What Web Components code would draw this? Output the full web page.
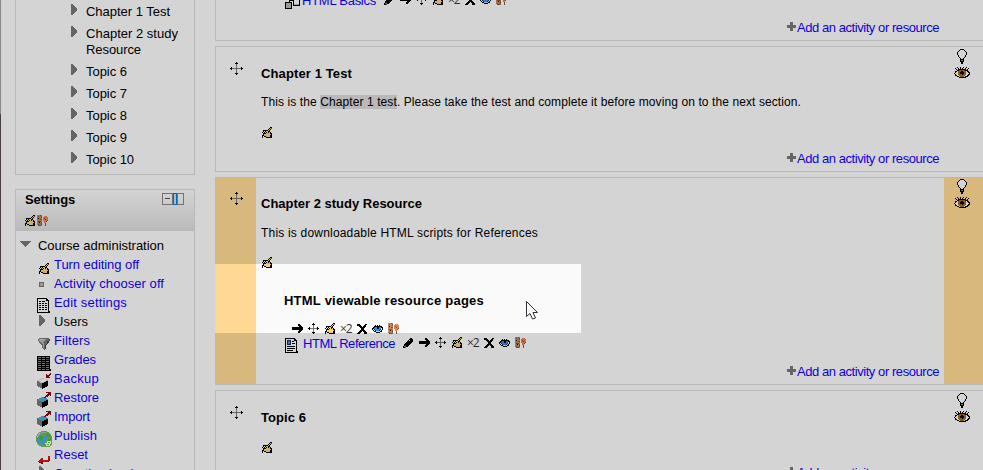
<!DOCTYPE html>
<html lang="en"><head><meta charset="utf-8"><title>Course</title>
<style>html,body{margin:0;height:470px;overflow:hidden;background:#fafafa;font:13px/16px "Liberation Sans",Arial,sans-serif;color:#000}</style></head>
<body><course-page></course-page>
<script>
const colors={k:'#000000',w:'#fafafa',y:'#f6ee28',p:'#f5c89b',g:'#777777',d:'#404040',l:'#b6b6b6',s:'#dddddd',o:'#a66a10',b:'#2f8cf0',n:'#062d79',r:'#900810',R:'#d51b10',G:'#28c04a',c:'#4ba9df',t:'#c08558',u:'#7c5738',e:'#e88252',D:'#222222',h:'#75b84c'};
const maps={
hand:`........kk
.......kyu
......kyk.
.kkkkkyk..
.k.kyykk..
k.kykykpk.
.kkkypppkk
.kpppppppk
kkppppppkk
k.kkppppkk
k...kkkkkk`,
mask:`tttut......
tuttu..eee.
ttttu.eeeee
tkttt.eueee
tttuu.eeuee
ttttt.eeeeu
tuuut..eeu.
ttktu..ee..
ttttu...u..
tuttu...u..
.uuut...u..`,
move:`......k......
.....kkk.....
......g......
......g......
......g......
.k....g....k.
kkgggggggggkk
.k....g....k.
......g......
......g......
......g......
.....kkk.....
......k......`,
moves:`.....k.....
....kkk....
.....g.....
.....g.....
.k...g...k.
kkgggggggkk
.k...g...k.
.....g.....
.....g.....
....kkk....
.....k.....`,
arrow:`......kk...
......kkk..
.......kkk.
kkkkkkkkkkk
kkkkkkkkkkk
kkkkkkkkkkk
.......kkk.
......kkk..
......kk...`,
x:`kkk.....kk
kkkk...kk.
..kkk.kkk.
...kkkkk..
....kkk...
....kkk...
...kkkkk..
..kkk.kkk.
.kkk...kkk
kkk....kkk`,
eye:`...k.k.k...
..kkkkkkkk.
.knbbkkbbkk
kkbbbkkbb.k
k.nbbbbbn.k
.k.nbbbnsk.
..kksssskk.
....kkkk...`,
pencil:`.......kk..
......kkkk.
.....kskkk.
....kkkkkk.
...kkkkkk..
..kkkkkk...
.kkkkkk....
.kdkkk.....
kggkk......
kkg........`,
bulb:`...kkkk...
..kwwwwk..
.kwwwwwwk.
kwwwwwwwwk
kwwwwwwwwk
kwwwwwwwwk
.kwwwwwwk.
.kwwwwwwk.
..kwwwwk..
...kwwk...
...kkkk...
...kggk...
...kkkk...
....kk....
....kk....`,
bigeye:`...k..k..k..k...
.k..k.k.k..k..k.
..k.kkkkkkkk.k..
...kkooooookkk..
.kkwoookkooowkk.
.kwwookkkkoowwkk
kwwwookkkkoowwwk
.kwwooookooowwkk
.kkwwoooooowwkk.
...kkwoooowkkk..
.....kkkkkkk....`,
doc:`kkkkkkkkkk...
kwwwwwwwwkk..
kwwwwwwwwkkk.
kwkkwkkkwwwk.
kwwwwwwwwwwk.
kwkkwkkwkkwk.
kwwwwwwwwwwk.
kwkkwkkwkkwk.
kwwwwwwwwwwk.
kwkkwkkwkkwk.
kwwwwwwwwwwk.
kwkkwkkwkkwk.
kwwwwwwwwwwk.
kwwwwwwwwwwkk
kkkkkkkkkkkkk`,
page:`kkkkkkkkkk...
kwwwwwwwwkk..
kwnnnnwwwkkk.
kwnggnwkkwwk.
kwngbnwwwwwk.
kwnGgnwkkkwk.
kwnnnnwwwwwk.
kwwwwwwwwwwk.
kwkkkkkkkkwk.
kwwwwwwwwwwk.
kwkkkkkkkkwk.
kwwwwwwwwwwk.
kwkkkkkkwwwk.
kwwwwwwwwwwkk
kkkkkkkkkkkkk`,
grades:`kkkkkkkkkkkkk.
kGGGkGGGkGGGk.
kkkkkkkkkkkkk.
kGGGkGGGkRRRk.
kkkkkkkkkkkkk.
kGGGkRRRkGGGk.
kkkkkkkkkkkkk.
kGGGkGGGkRRRk.
kkkkkkkkkkkkk.
kGGGkGGGkGGGk.
kkkkkkkkkkkkk.
kGGGkRRRkGGGk.
kkkkkkkkkkkkk.
kGGGkGGGkGGGkk
kkkkkkkkkkkkkk`,
filter:`.gggggggggg.
glssslllgggd
gllllllggggd
.gllllgggdd.
.ggllggggdd.
..ggllgggd..
...gglggd...
....glgd....
....glgd....
....glgd....
.....ggd....
......g.....`,
backup:`.............r
.........r..rr
.........rrrr.
.........rrr..
.........rrrr.
....sss.......
..ssswwwss....
sswwwwwwwwl...
ggsswwwwlkk...
gggssslkkkk...
gggggkkkkkk...
gggggkkkkkk...
gggggkkkkkk...
.ggggkkkkk....
...ggkkk......
.....k........`,
restore:`.........rrrrr
...........rrr
..........rrrr
.........rrr.r
........rrr...
....cccrr.....
..cccccccc....
gcccccccccc...
ggccccccckk...
ggggccckkkk...
gggggkkkkkk...
gggggkkkkkk...
gggggkkkkkk...
.ggggkkkkk....
...ggkkk......
.....k........`,
globe:`.....hhhhhh.....
...hhlllllhhh...
..hslcccchhGhh..
.hslcchhhchGGhh.
.hlcchhhcccGGGh.
hslcGGhccccchGhh
hlcGGGGhccccchhh
hccGGGGhcccchhGh
hcchGGcccchhGGGh
hcccGccccchhGGhh
hhcccccccchwwwwh
.hccccccchhwhhwh
.hhccccchwwwwwwh
..hhcccchhwhhwhh
...hhhhhhhwwwwh.
.....hhhhhhhhh..`,
reset:`..........RR
..........RR
...RR.....RR
..RRR.....Rr
.RRRRRRRRRRr
RRRRRRRRRRr.
.rrrr.......
...rr.......`,
tri:`gg....
ggg...
gggg..
ggggg.
gggggg
gggggg
gggggg
ggggg.
gggg..
ggg...
gg....`,
down:`ggggggggggg
.ggggggggg.
..ggggggg..
...ggggg...
....ggg....
.....g.....`,
dot:`ggggg
glllg
glllg
glllg
ggggg`,
plus:`...ggg...
...ggg...
...ggg...
ggggggggg
ggggggggg
ggggggggg
...ggg...
...ggg...
...ggg...`,
scorm:`........kkkkkkk
........kwwwwwk
....kkkkkwwwwwk
....k...kwwwwwk
kkkkkkk.kwwwwwk
klllllk.kwwwwwk
klllllk.klllllk
klllllk.kkkkkkk
klllllk........
klllllk........
kkkkkkk........`};
customElements.define('pixel-icon',class extends HTMLElement{
 connectedCallback(){const r=this.attachShadow({mode:'open'}),a=maps[this.getAttribute('name')].split('\n').map(v=>v.trim()),w=Math.max(...a.map(v=>v.length));let s='';
 a.forEach((v,y)=>[...v].forEach((c,x)=>{if(c!='.')s+=`<rect x="${x}" y="${y}" width="1" height="1" fill="${colors[c]}"/>`}));
 r.innerHTML=`<style>:host{display:inline-block;flex:none;width:${w}px;height:${a.length}px}svg{display:block}</style><svg width="${w}" height="${a.length}" shape-rendering="crispEdges">${s}</svg>`}
});
customElements.define('fit-text',class extends HTMLElement{
 connectedCallback(){const r=this.attachShadow({mode:'open'});r.innerHTML='<style>:host{display:inline-block;white-space:nowrap;flex:none}</style><slot></slot>';
 const w=+this.getAttribute('w'),n=this.textContent.length;this.style.letterSpacing=((w-this.getBoundingClientRect().width)/n)+'px';this.style.width=w+'px'}
});
customElements.define('tree-item',class extends HTMLElement{
 connectedCallback(){const r=this.attachShadow({mode:'open'}),g=k=>this.getAttribute(k);
 r.innerHTML=`<style>:host{display:flex;height:19px;padding-left:${g('x')||21}px;color:${g('plain')!==null?'#000':'#1200ff'}}i{width:17px;flex:none;padding-top:${g('dy')||4}px;margin-left:${g('dx')||0}px;margin-right:${-(g('dx')||0)}px;box-sizing:border-box}pixel-icon{display:block}</style><i><pixel-icon name="${g('icon')}"></pixel-icon></i><fit-text w="${g('w')}">${this.textContent}</fit-text>`}
});
customElements.define('topic-item',class extends HTMLElement{
 connectedCallback(){this.attachShadow({mode:'open'}).innerHTML='<style>:host{display:flex;align-items:flex-start;margin:0 0 6px 55px}pixel-icon{margin:0 9px 0 0}</style><pixel-icon name="tri"></pixel-icon><div><slot></slot></div>'}
});
customElements.define('side-bar',class extends HTMLElement{
 connectedCallback(){this.attachShadow({mode:'open'}).innerHTML=`<style>:host{display:block;width:180px;flex:none}section{border:1px solid #d9d9d9;box-sizing:border-box}.nav{height:175px;border-top:0;padding-top:4px;margin-bottom:14px}.set{height:300px}header{height:41px;box-sizing:border-box;padding:3px 10px 0 9px;background:linear-gradient(#fafafa,#dadada);display:grid;grid-template-columns:1fr 22px}b{font-size:13px;line-height:16px;margin-top:-1px}.tools{display:flex;gap:2px;margin-top:2px}.dock{display:flex;height:12px;margin-top:0}.dock i{box-sizing:border-box;border:1px solid #888}.dock i:nth-child(1){width:11px;padding:4px 2px}.dock i:nth-child(1):after{content:"";display:block;height:1px;background:#555}.dock i:nth-child(2){width:4px;border-color:#087bd0;background:#bde2ff}.dock i:nth-child(3){width:7px}nav{display:block;padding-top:5px}.course{display:flex;padding:2px 0 0 5px;height:19px}.course pixel-icon{margin:3px 7px 0 -1px}</style>
<section class="nav"><topic-item><fit-text w="84">Chapter 1 Test</fit-text></topic-item><topic-item><fit-text w="92">Chapter 2 study</fit-text><br><fit-text w="55">Resource</fit-text></topic-item><topic-item><fit-text w="41">Topic 6</fit-text></topic-item><topic-item><fit-text w="41">Topic 7</fit-text></topic-item><topic-item><fit-text w="41">Topic 8</fit-text></topic-item><topic-item><fit-text w="41">Topic 9</fit-text></topic-item><topic-item><fit-text w="48">Topic 10</fit-text></topic-item></section>
<section class="set"><header><b><fit-text w="50">Settings</fit-text></b><div class="dock"><i></i><i></i><i></i></div><div class="tools"><pixel-icon name="hand"></pixel-icon><pixel-icon name="mask"></pixel-icon></div></header><nav><div class="course"><pixel-icon name="down"></pixel-icon><fit-text w="126">Course administration</fit-text></div>
<tree-item icon="hand" w="85" dx="2" dy="6">Turn editing off</tree-item><tree-item icon="dot" w="110" dx="2" dy="6">Activity chooser off</tree-item><tree-item icon="doc" w="73" dy="3">Edit settings</tree-item><tree-item icon="tri" w="34" dx="2" dy="1" plain>Users</tree-item><tree-item icon="filter" w="36" dx="1" dy="5">Filters</tree-item><tree-item icon="grades" w="42" dy="4">Grades</tree-item><tree-item icon="backup" w="45" dy="2">Backup</tree-item><tree-item icon="restore" w="45" dy="2">Restore</tree-item><tree-item icon="restore" w="36" dy="2">Import</tree-item><tree-item icon="globe" w="43" dx="-1" dy="3">Publish</tree-item><tree-item icon="reset" w="34" dx="1" dy="9">Reset</tree-item><tree-item icon="tri" w="83" dx="2" dy="0">Question bank</tree-item></nav></section>`}
});
customElements.define('edit-tools',class extends HTMLElement{
 connectedCallback(){this.attachShadow({mode:'open'}).innerHTML=`<style>:host{display:flex;align-items:center;gap:5px;height:13px;color:#333}.hand{margin-left:1px}span{font:12px/13px "Open Sans","Noto Sans",sans-serif;width:12px;letter-spacing:-1px;margin-top:-1px}</style>${this.hasAttribute('pencil')?'<pixel-icon name="pencil"></pixel-icon>':''}<pixel-icon name="arrow"></pixel-icon><pixel-icon name="moves"></pixel-icon><pixel-icon class="hand" name="hand"></pixel-icon><span>×2</span><pixel-icon name="x"></pixel-icon><pixel-icon name="eye"></pixel-icon><pixel-icon name="mask"></pixel-icon>`}
});
customElements.define('course-section',class extends HTMLElement{
 connectedCallback(){const f=this.hasAttribute('first'),c=this.hasAttribute('current');this.attachShadow({mode:'open'}).innerHTML=`<style>:host{height:${this.getAttribute('h')}px;box-sizing:border-box;border:1px solid #d9d9d9;border-right:0;${f?'border-top:0;':''}display:grid;grid-template-columns:40px 1fr 39px;flex:none}.side{background:${c?'#ffd993':'transparent'};display:flex;flex-direction:column;align-items:center}.left{padding-top:${c?14:15}px}.right{padding:${c?1:2}px 3px 0 0;gap:3px}.body{padding:0 5px;display:flex;flex-direction:column;min-width:0}.content{flex:1;min-height:0}.add{display:flex;justify-content:flex-end;align-items:center;gap:1px;color:#1200ff;height:16px;margin-bottom:4px;flex:none}.add pixel-icon{margin-top:-3px}</style><div class="side left">${f?'':'<pixel-icon name="move"></pixel-icon>'}</div><div class="body"><div class="content"><slot></slot></div><div class="add"><pixel-icon name="plus"></pixel-icon><fit-text w="142">Add an activity or resource</fit-text></div></div><div class="side right">${f?'':'<pixel-icon name="bulb"></pixel-icon><pixel-icon name="bigeye"></pixel-icon>'}</div>`}
});
customElements.define('course-page',class extends HTMLElement{
 connectedCallback(){this.attachShadow({mode:'open'}).innerHTML=`<style>:host{display:flex;position:relative;width:983px;height:470px;overflow:hidden;padding-left:14px;box-sizing:border-box;border-left:1px solid;border-image:linear-gradient(#888 115px,#493f45 115px) 1}main{width:768px;margin-left:20px;display:flex;flex-direction:column;gap:5px}.title{font-size:13px;font-weight:bold;padding-top:19px;height:16px}.desc{font-size:12px;margin-top:12px;height:16px}mark{background:#dadada;color:inherit}.hand{display:block;margin-top:17px}.row{display:flex;align-items:center;color:#1200ff}.spot{position:absolute;left:214px;top:264px;width:366px;height:69px;box-shadow:0 0 0 1000px rgba(0,0,0,.15)}.cursor{position:absolute;left:523px;top:300px}.label{font-weight:bold;margin:25px 0 0 23px}.t1{margin:12px 0 0 31px}.r2{margin:0 0 0 24px;height:17px}.r2 edit-tools{margin-left:8px;margin-top:-2px}.r2 fit-text{margin-left:5px}</style>
<side-bar></side-bar><main>
<course-section first h="41"><div class="row" style="margin:-8px 0 0 24px;height:17px"><pixel-icon name="scorm" style="margin-top:5px"></pixel-icon><fit-text w="74" style="margin-left:2px">HTML Basics</fit-text><edit-tools pencil style="margin-left:8px;margin-top:-2px"></edit-tools></div></course-section>
<course-section h="126"><div class="title"><fit-text w="91">Chapter 1 Test</fit-text></div><div class="desc"><fit-text w="540">This is the <mark>Chapter 1 test</mark>. Please take the test and complete it before moving on to the next section.</fit-text></div><pixel-icon class="hand" name="hand" style="margin-left:1px"></pixel-icon></course-section>
<course-section current h="208"><div class="title" style="padding-top:18px"><fit-text w="161">Chapter 2 study Resource</fit-text></div><div class="desc" style="margin-top:13px"><fit-text w="277">This is downloadable HTML scripts for References</fit-text></div><pixel-icon class="hand" name="hand" style="margin-left:1px;margin-top:16px"></pixel-icon><div class="label"><fit-text w="200">HTML viewable resource pages</fit-text></div><edit-tools class="t1" style="margin-top:13px"></edit-tools><div class="row r2"><pixel-icon name="page" style="margin-top:3px"></pixel-icon><fit-text w="92">HTML Reference</fit-text><edit-tools pencil></edit-tools></div></course-section>
<course-section h="96"><div class="title"><fit-text w="45">Topic 6</fit-text></div><pixel-icon class="hand" name="hand" style="margin-left:1px;margin-top:16px"></pixel-icon></course-section>
</main><div class="spot"></div><svg class="cursor" width="14" height="21"><path d="M2.500 1.500v15l3.500-3 2.500 5.500 3-1-2.500-5.500h4.500z" fill="#fafafa" stroke="#303038"/></svg>`}
});
</script></body></html>
